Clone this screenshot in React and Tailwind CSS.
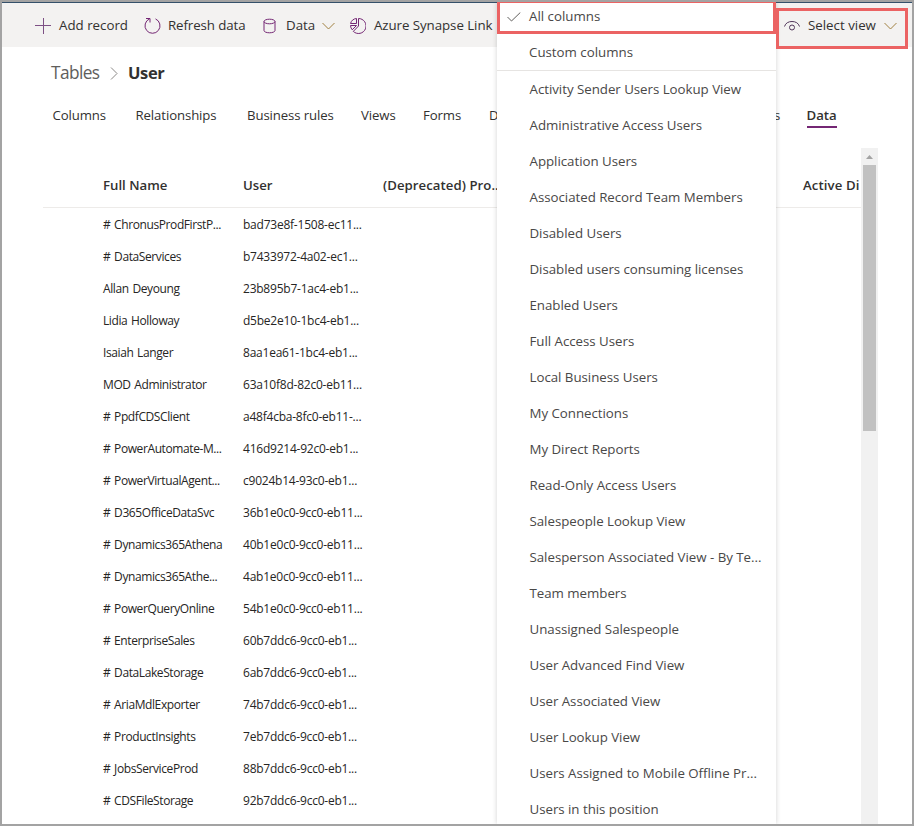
const tabs = [
  ["Columns", "w-[83px]"],
  ["Relationships", "w-[111.500px]"],
  ["Business rules", "w-[114px]"],
  ["Views", "w-[62px]"],
  ["Forms", "w-[66px]"],
  ["D", "w-[285px]"],
  ["s", "w-[32.500px]"],
];

const rows = [
  ["# ChronusProdFirstP...", "bad73e8f-1508-ec11..."],
  ["# DataServices", "b7433972-4a02-ec1..."],
  ["Allan Deyoung", "23b895b7-1ac4-eb1..."],
  ["Lidia Holloway", "d5be2e10-1bc4-eb1..."],
  ["Isaiah Langer", "8aa1ea61-1bc4-eb1..."],
  ["MOD Administrator", "63a10f8d-82c0-eb11..."],
  ["# PpdfCDSClient", "a48f4cba-8fc0-eb11-..."],
  ["# PowerAutomate-M...", "416d9214-92c0-eb1..."],
  ["# PowerVirtualAgent...", "c9024b14-93c0-eb1..."],
  ["# D365OfficeDataSvc", "36b1e0c0-9cc0-eb11..."],
  ["# Dynamics365Athena", "40b1e0c0-9cc0-eb11..."],
  ["# Dynamics365Athe...", "4ab1e0c0-9cc0-eb11..."],
  ["# PowerQueryOnline", "54b1e0c0-9cc0-eb11..."],
  ["# EnterpriseSales", "60b7ddc6-9cc0-eb1..."],
  ["# DataLakeStorage", "6ab7ddc6-9cc0-eb1..."],
  ["# AriaMdlExporter", "74b7ddc6-9cc0-eb1..."],
  ["# ProductInsights", "7eb7ddc6-9cc0-eb1..."],
  ["# JobsServiceProd", "88b7ddc6-9cc0-eb1..."],
  ["# CDSFileStorage", "92b7ddc6-9cc0-eb1..."],
];

const views = [
  "Activity Sender Users Lookup View",
  "Administrative Access Users",
  "Application Users",
  "Associated Record Team Members",
  "Disabled Users",
  "Disabled users consuming licenses",
  "Enabled Users",
  "Full Access Users",
  "Local Business Users",
  "My Connections",
  "My Direct Reports",
  "Read-Only Access Users",
  "Salespeople Lookup View",
  "Salesperson Associated View - By Te...",
  "Team members",
  "Unassigned Salespeople",
  "User Advanced Find View",
  "User Associated View",
  "User Lookup View",
  "Users Assigned to Mobile Offline Pr...",
  "Users in this position",
];

function Icon({ w, h, className = "", children }) {
  return (
    <svg width={w} height={h} viewBox={`0 0 ${w} ${h}`} fill="none" strokeWidth="1" className={`shrink-0 ${className}`}>
      {children}
    </svg>
  );
}

function Chevron() {
  return (
    <Icon w={13} h={8} className="stroke-[#a08040]">
      <path d="M.5 1l6 6 6-6" />
    </Icon>
  );
}

function Toolbar() {
  return (
    <div className="flex h-11 shrink-0 items-center bg-[#f3f2f1] pl-[33px] pt-px text-[13.3px] text-[#323130]">
      <div className="flex w-[109px] items-center gap-2">
        <Icon w={16} h={16} className="stroke-[#7d5085]">
          <path d="M8.5 0v16M0 7.5h16" />
        </Icon>
        <span>Add record</span>
      </div>
      <div className="flex w-[119px] items-center gap-2">
        <Icon w={17} h={16} className="stroke-[#742774]">
          <path d="M2 .5h4v4M5.500.9A7.500 7.500 0 1 0 11.500.9" />
        </Icon>
        <span className="-ml-px tracking-[-0.1px]">Refresh data</span>
      </div>
      <div className="flex w-[87px] items-center">
        <Icon w={13} h={16} className="stroke-[#742774]">
          <ellipse cx="6.5" cy="3.5" rx="5.5" ry="2.3" />
          <path d="M1 3.5v9c0 1.3 2.4 2.3 5.5 2.3s5.5-1 5.5-2.3v-9" />
        </Icon>
        <span className="ml-[10px] w-[36px]">Data</span>
        <Chevron />
      </div>
      <div className="flex w-[434px] items-center gap-2">
        <Icon w={16} h={16} className="stroke-[#742774]">
          <path d="M8.500.5a7.500 7.500 0 1 1-5.200 12.900l5.200-5.400z" />
          <path d="M6.500.5v5h-6a7 7 0 0 1 6-5zM.5 7.500h6l-4.300 4.300A7 7 0 0 1 .5 7.500z" />
        </Icon>
        <span className="tracking-[-0.06px]">Azure Synapse Link</span>
      </div>
      <div className="flex items-center">
        <Icon w={16} h={12} className="stroke-[#51365a]">
          <path d="M.5 6.5C1.5 3 4.5 1.5 8 1.5s6.500 1.500 7.500 5" />
          <circle cx="8" cy="7.500" r="2.500" />
        </Icon>
        <span className="ml-2 w-[76px]">Select view</span>
        <Chevron />
      </div>
    </div>
  );
}

function DataGrid() {
  return (
    <div className="ml-[41px] mt-[20px] flex min-h-0 flex-1">
      <div className="w-[818px] overflow-hidden">
        <div className="flex h-[60px] items-end border-b border-[#edebe9] pb-[12px] pl-[60px] text-[13.2px] font-semibold leading-5 text-[#323130]">
          <span className="w-[140px] shrink-0">Full Name</span>
          <span className="w-[140px] shrink-0">User</span>
          <span className="w-[420px] shrink-0 tracking-[0.05px]">(Deprecated) Pro...</span>
          <span className="shrink-0 tracking-[0.1px]">Active Di</span>
        </div>
        <div className="pl-[60px] pt-px text-[12px] text-[#262524]">
          {rows.map(([name, id]) => (
            <div key={id + name} className="flex h-8 items-center">
              <span className="w-[140px] tracking-[-0.4px] [word-spacing:1px]">{name}</span>
              <span className="tracking-[-0.23px]">{id}</span>
            </div>
          ))}
        </div>
      </div>
      <div className="flex w-[17px] flex-col items-center bg-[#f1f1f1]">
        <div className="flex h-[17px] items-center">
          <svg width="7" height="4" viewBox="0 0 7 4" className="fill-[#a3a3a3]">
            <path d="M0 4L3.500 0 7 4z" />
          </svg>
        </div>
        <div className="h-[266px] w-[13px] bg-[#c1c1c1]" />
      </div>
    </div>
  );
}

function ViewMenu() {
  return (
    <div className="absolute left-[497px] top-0 h-[824px] w-[279px] overflow-hidden bg-white text-[13.3px] text-[#494847]">
      <div className="flex h-[34px] items-center border-[3px] border-[#eb6363] pl-[7px]">
        <Icon w={14} h={10} className="stroke-[#605e5c]">
          <path d="M.5 5l4 4L13.300.5" />
        </Icon>
        <span className="ml-2">All columns</span>
      </div>
      <div className="flex h-[37px] items-center border-b border-[#e6e4e2] pl-8 pt-[2px]">Custom columns</div>
      {views.map((v) => (
        <div key={v} className="flex h-9 items-center pl-[32.500px] pt-[2px] tracking-[-0.03px]">{v}</div>
      ))}
    </div>
  );
}

export default function App() {
  return (
    <div className="relative flex h-[826px] w-[914px] flex-col overflow-hidden whitespace-nowrap border-2 border-[#a3a3a3] bg-white font-['Open_Sans','Noto_Sans',sans-serif]">
      <div className="h-px shrink-0 bg-[#34506a]" />
      <Toolbar />
      <div className="mt-[14px] flex h-6 shrink-0 items-center pl-[49px] text-[17.300px]">
        <span className="w-[59px] tracking-[-0.6px] text-[#605e5c]">Tables</span>
        <Icon w={8} h={13} className="stroke-[#8a8886]">
          <path d="M1 .5l6 6-6 6" />
        </Icon>
        <span className="ml-[10px] pt-px text-[16.500px] font-bold tracking-[-0.35px] text-[#323130]">User</span>
      </div>
      <div className="mt-[20px] flex h-[23px] shrink-0 pl-[50.500px] text-[13.2px] leading-5 text-[#323130]">
        {tabs.map(([label, width]) => (
          <span key={label} className={`${width} shrink-0 tracking-[-0.1px]`}>{label}</span>
        ))}
        <span className="border-b-2 border-[#742774] font-semibold">Data</span>
      </div>
      <DataGrid />
      <div className="absolute -left-0.5 -top-0.5 h-[826px] w-[914px]">
        <div className="absolute left-[497px] top-[2px] h-[822px] w-[279px] shadow-[0_0_5px_rgba(0,0,0,0.18)]" />
        <ViewMenu />
        <div className="absolute left-0 bottom-0 h-[2px] w-full bg-[#a3a3a3]" />
        <div className="absolute left-[776px] top-2 h-[41px] w-[132px] border-[3px] border-[#eb6363]" />
      </div>
    </div>
  );
}
